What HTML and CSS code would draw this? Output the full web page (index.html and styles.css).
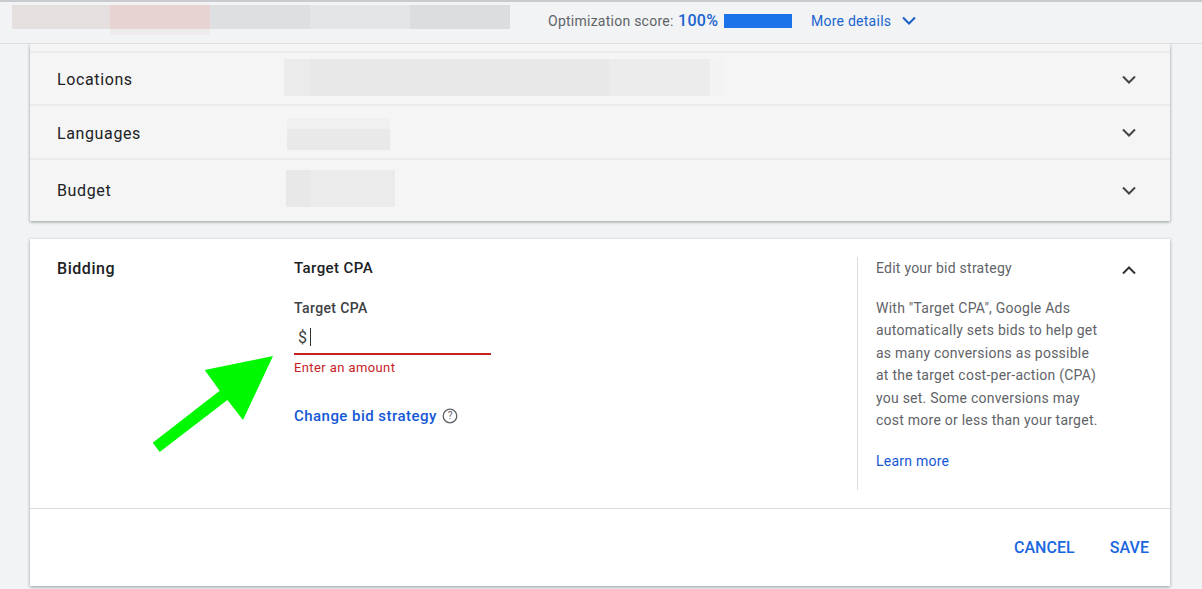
FILE: index.html
```html
<!DOCTYPE html>
<html lang="en">
<head>
<meta charset="utf-8">
<title>Campaign settings</title>
<link rel="stylesheet" href="styles.css">
</head>
<body>
<header class="topbar">
  <div class="blurs">
    <span class="b b1"></span><span class="b b2"></span><span class="b b3"></span><span class="b b4"></span><span class="b b5"></span>
  </div>
  <div class="score">
    <span class="score-label">Optimization score:</span>
    <span class="score-value">100%</span>
    <span class="score-bar"></span>
    <a class="details">More details</a>
    <svg class="chev-blue" width="16" height="10" viewBox="0 0 16 10"><path d="M2 1.5 8 7.5 14 1.5" fill="none" stroke="#1a5fc8" stroke-width="2"/></svg>
  </div>
</header>
<main class="page">
  <section class="card settings">
    <div class="sliver"></div>
    <div class="row row-loc">
      <div class="row-label">Locations</div>
      <div class="redact r-loc"></div>
      <svg class="chev" width="16" height="10" viewBox="0 0 16 10"><path d="M2 1.5 8 7.5 14 1.5" fill="none" stroke="#444" stroke-width="2"/></svg>
    </div>
    <div class="row row-lang">
      <div class="row-label">Languages</div>
      <div class="redact r-lang"></div>
      <svg class="chev" width="16" height="10" viewBox="0 0 16 10"><path d="M2 1.5 8 7.5 14 1.5" fill="none" stroke="#444" stroke-width="2"/></svg>
    </div>
    <div class="row row-budget">
      <div class="row-label">Budget</div>
      <div class="redact r-budget"></div>
      <svg class="chev" width="16" height="10" viewBox="0 0 16 10"><path d="M2 1.5 8 7.5 14 1.5" fill="none" stroke="#444" stroke-width="2"/></svg>
    </div>
  </section>
  <section class="card bidding">
    <div class="bid-body">
      <div class="bid-label">Bidding</div>
      <div class="bid-form">
        <div class="form-title">Target CPA</div>
        <label class="field-label">Target CPA</label>
        <div class="field"><span class="currency">$</span><span class="caret"></span></div>
        <div class="field-error">Enter an amount</div>
        <div class="change"><a class="change-link">Change bid strategy</a>
          <svg class="help" width="16" height="16" viewBox="0 0 16 16"><circle cx="8" cy="8" r="6.8" fill="none" stroke="#5f6368" stroke-width="1.3"/><text x="8" y="11.4" text-anchor="middle" class="help-q">?</text></svg>
        </div>
      </div>
      <aside class="side">
        <div class="side-title">Edit your bid strategy</div>
        <p class="side-text">With "Target CPA", Google Ads automatically sets bids to help get as many conversions as possible at the target cost-per-action (CPA) you set. Some conversions may cost more or less than your target.</p>
        <a class="learn">Learn more</a>
      </aside>
      <svg class="chev chev-up" width="16" height="10" viewBox="0 0 16 10"><path d="M2 8.5 8 2.5 14 8.5" fill="none" stroke="#333" stroke-width="2"/></svg>
    </div>
    <footer class="actions">
      <a class="action">CANCEL</a>
      <a class="action">SAVE</a>
    </footer>
  </section>
  <svg class="arrow" width="130" height="105" viewBox="0 0 130 105"><polygon points="123,2 54.7,16 69.7,36.7 2.7,88.7 9.7,98 77.4,46 93,66" fill="#00f800"/></svg>
</main>
</body>
</html>
```
FILE: styles.css
```css
* { box-sizing: border-box; }
html, body { margin: 0; padding: 0; height: 589px; overflow: hidden; }
body {
  background: #f1f3f4;
  font-family: Roboto, "Liberation Sans", sans-serif;
  color: #202124;
  position: relative;
}
.topbar {
  height: 44px;
  display: flex;
  align-items: flex-start;
  padding: 5px 0 0 12px;
  background: #f1f3f4;
  border-top: 2px solid #c9cbce;
  border-bottom: 1px solid #dcdee0;
  position: relative;
  z-index: 2;
}
.blurs { display: flex; width: 498px; height: 24px; margin-top: -2px; }
.b { flex: 0 0 100px; height: 24px; }
.b1 { flex-basis: 98px; background: #e6dfdf; }
.b2 { background: linear-gradient(#e8d3d3 24px, #eeebec 24px); height: 30px; }
.b3 { background: #dedfe1; }
.b4 { background: #e4e5e7; }
.b5 { background: #dcdddf; }
.score {
  display: flex;
  align-items: center;
  height: 24px;
  margin: 0 0 0 38px;
  font-size: 14px;
  letter-spacing: .25px;
  white-space: nowrap;
  padding-top: 3px;
}
.score-label { color: #5f6368; width: 130px; }
.score-value { color: #1a63d0; font-size: 16px; font-weight: 500; width: 46px; letter-spacing: .3px; }
.score-bar { width: 68px; height: 14px; background: #1a73e8; margin-right: 19px; }
.details { color: #1a63d0; width: 90px; }
.chev-blue { display: block; }

.page { padding: 0 32px 0 30px; position: relative; }
.card { background: #f5f5f5; box-shadow: 0 1px 3px rgba(60,64,67,.5); }
.settings { height: 177px; }
.sliver { height: 9px; border-bottom: 2px solid #ebebeb; }
.row {
  display: flex;
  align-items: center;
  padding: 0 33px 0 27px;
  border-bottom: 2px solid #ebebeb;
}
.row-loc { height: 53px; padding-top: 2px; }
.row-lang { height: 54px; padding-top: 2px; }
.row-budget { height: 61px; border-bottom: 0; }
.row-label { width: 227px; font-size: 16px; letter-spacing: .62px; flex: none; }
.redact { flex: none; }
.r-loc {
  width: 440px;
  height: 37px;
  margin-bottom: 4px;
  background: linear-gradient(to right, #ebebeb 26px, #e8e8e8 26px, #e8e8e8 325px, #ebeceb 325px, #ebeceb 426px, #f3f3f3 426px);
}
.r-lang {
  width: 103px;
  height: 32px;
  margin: 2px 0 0 3px;
  background: linear-gradient(#f0f0f0 35%, #e9e9e9 35%);
}
.r-budget {
  width: 109px;
  height: 37px;
  margin: 0 0 4px 2px;
  background: linear-gradient(to right, #e8e8e8 24px, #eaebea 24px);
}
.chev { margin-left: auto; display: block; }

.bidding { background: #fff; margin-top: 18px; height: 347px; display: flex; flex-direction: column; }
.bid-body { flex: 1; display: flex; padding: 18px 33px 0 27px; border-bottom: 1px solid #dadce0; height: 270px; }
.bid-label { width: 237px; font-size: 16px; font-weight: 500; letter-spacing: .55px; flex: none; line-height: 24px; }
.bid-form { width: 563px; flex: none; font-size: 14px; }
.form-title { font-size: 15px; font-weight: 500; line-height: 22px; letter-spacing: .42px; }
.field-label { display: block; margin-top: 17px; line-height: 24px; font-weight: 500; color: #3c4043; letter-spacing: .38px; }
.field {
  width: 197px;
  height: 36px;
  border-bottom: 2px solid #c5221f;
  display: flex;
  align-items: center;
  padding: 2px 0 0 4px;
  font-size: 16px;
  margin-top: -1px;
}
.currency { color: #3c4043; }
.caret { width: 1px; height: 18px; background: #333; margin-left: 3px; }
.field-error { color: #c5221f; font-size: 13px; letter-spacing: .4px; line-height: 18px; margin-top: 4px; }
.change { display: flex; align-items: center; margin-top: 27px; height: 24px; }
.change-link { color: #1558d6; font-size: 15px; font-weight: 500; letter-spacing: .46px; }
.help { margin-left: 5px; }
.help-q { font-size: 10px; fill: #5f6368; font-family: Roboto, sans-serif; }
.side {
  width: 240px;
  height: 233px;
  flex: none;
  border-left: 1px solid #dadce0;
  padding-left: 18px;
  font-size: 14px;
  color: #5f6368;
  letter-spacing: .24px;
}
.side-title { line-height: 22px; }
.side-text { margin: 18px 0 0; width: 226px; line-height: 22.4px; }
.learn { display: block; margin-top: 19px; color: #1558d6; line-height: 22px; }
.chev-up { margin: 8px 0 0 auto; }
.actions { height: 77px; display: flex; justify-content: flex-end; align-items: center; gap: 35px; padding: 0 21px 0 0; }
.action { color: #1a66e0; font-size: 16px; letter-spacing: .05px; font-weight: 500; }
.arrow { position: absolute; left: 150px; top: 310px; }
```
